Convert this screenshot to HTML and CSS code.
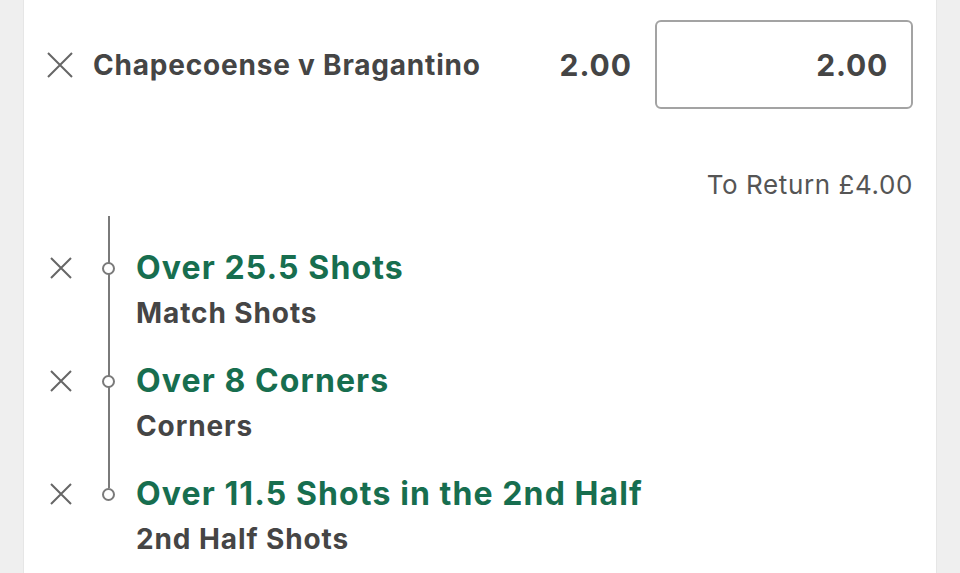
FILE: index.html
```html
<!DOCTYPE html>
<html lang="en">
<head>
<meta charset="utf-8">
<title>Bet slip</title>
<link rel="stylesheet" href="styles.css">
</head>
<body>
<div class="page">
  <div class="gutter gutter-left"></div>
  <main class="card">
    <div class="selection">
      <button class="remove remove-lg" aria-label="Remove">
        <svg viewBox="0 0 26 26" width="26" height="26"><path d="M1 1 L25 25 M25 1 L1 25" /></svg>
      </button>
      <div class="event">Chapecoense v Bragantino</div>
      <div class="odds">2.00</div>
      <div class="stake">2.00</div>
    </div>
    <div class="return">To Return £4.00</div>
    <ul class="legs">
      <li class="leg">
        <button class="remove remove-sm" aria-label="Remove">
          <svg viewBox="0 0 22 22" width="22" height="22"><path d="M1 1 L21 21 M21 1 L1 21" /></svg>
        </button>
        <span class="dot"></span>
        <div class="leg-text">
          <div class="leg-title">Over 25.5 Shots</div>
          <div class="leg-market">Match Shots</div>
        </div>
      </li>
      <li class="leg">
        <button class="remove remove-sm" aria-label="Remove">
          <svg viewBox="0 0 22 22" width="22" height="22"><path d="M1 1 L21 21 M21 1 L1 21" /></svg>
        </button>
        <span class="dot"></span>
        <div class="leg-text">
          <div class="leg-title">Over 8 Corners</div>
          <div class="leg-market">Corners</div>
        </div>
      </li>
      <li class="leg">
        <button class="remove remove-sm" aria-label="Remove">
          <svg viewBox="0 0 22 22" width="22" height="22"><path d="M1 1 L21 21 M21 1 L1 21" /></svg>
        </button>
        <span class="dot"></span>
        <div class="leg-text">
          <div class="leg-title">Over 11.5 Shots in the 2nd Half</div>
          <div class="leg-market">2nd Half Shots</div>
        </div>
      </li>
    </ul>
  </main>
  <div class="gutter gutter-right"></div>
</div>
</body>
</html>
```

FILE: styles.css
```css
* { box-sizing: border-box; }
html, body {
  margin: 0;
  padding: 0;
  background: #efefef;
  font-family: Inter, "Noto Sans", sans-serif;
}
.page {
  display: flex;
  height: 573px;
  overflow: hidden;
}
.gutter {
  width: 24px;
  flex: none;
  background: #efefef;
}
.gutter-left { border-right: 1px solid #e6e6e6; }
.gutter-right { border-left: 1px solid #e6e6e6; }
.card {
  flex: 1;
  background: #fff;
  padding: 20px 23px 0 22px;
}
.remove {
  border: 0;
  background: none;
  padding: 0;
  display: flex;
  align-items: center;
  justify-content: center;
  flex: none;
}
.remove svg path {
  stroke: #666;
  stroke-width: 2;
  fill: none;
}
.selection {
  display: flex;
  align-items: center;
  height: 89px;
}
.remove-lg { width: 26px; height: 26px; margin-left: 1px; }
.event {
  margin-left: 20px;
  font-size: 28px;
  letter-spacing: 0.8px;
  font-weight: 700;
  color: #454545;
  flex: 1;
}
.odds {
  font-size: 30px;
  letter-spacing: 1px;
  font-weight: 700;
  color: #454545;
  margin-right: 23px;
}
.stake {
  width: 258px;
  height: 89px;
  border: 2px solid #a3a3a3;
  border-radius: 6px;
  display: flex;
  align-items: center;
  justify-content: flex-end;
  padding-right: 23px;
  font-size: 30px;
  letter-spacing: 0.8px;
  font-weight: 700;
  color: #454545;
}
.return {
  margin-top: 61px;
  text-align: right;
  font-size: 26px;
  letter-spacing: 0.6px;
  line-height: 30px;
  color: #555;
}
.legs {
  list-style: none;
  margin: 16px 0 0;
  padding: 32px 0 0;
  position: relative;
  display: flex;
  flex-direction: column;
  gap: 23px;
}
.legs::before {
  content: "";
  position: absolute;
  left: 62px;
  top: 0;
  width: 2px;
  height: 272px;
  background: #7a7a7a;
}
.leg {
  display: grid;
  grid-template-columns: 22px 64px 1fr;
  grid-template-rows: 40px 50px;
  margin-left: 4px;
}
.remove-sm { width: 22px; height: 40px; }
.dot {
  width: 13px;
  height: 13px;
  border: 2px solid #7a7a7a;
  border-radius: 50%;
  background: #fff;
  align-self: center;
  justify-self: end;
  margin-right: 21px;
  position: relative;
  z-index: 1;
}
.leg-text { grid-column: 3; grid-row: 1 / span 2; }
.leg-title {
  font-size: 32px;
  letter-spacing: 1.1px;
  line-height: 40px;
  font-weight: 700;
  color: #176e4f;
}
.leg-market {
  font-size: 28px;
  letter-spacing: 0.9px;
  line-height: 50px;
  font-weight: 700;
  color: #454545;
}
```
